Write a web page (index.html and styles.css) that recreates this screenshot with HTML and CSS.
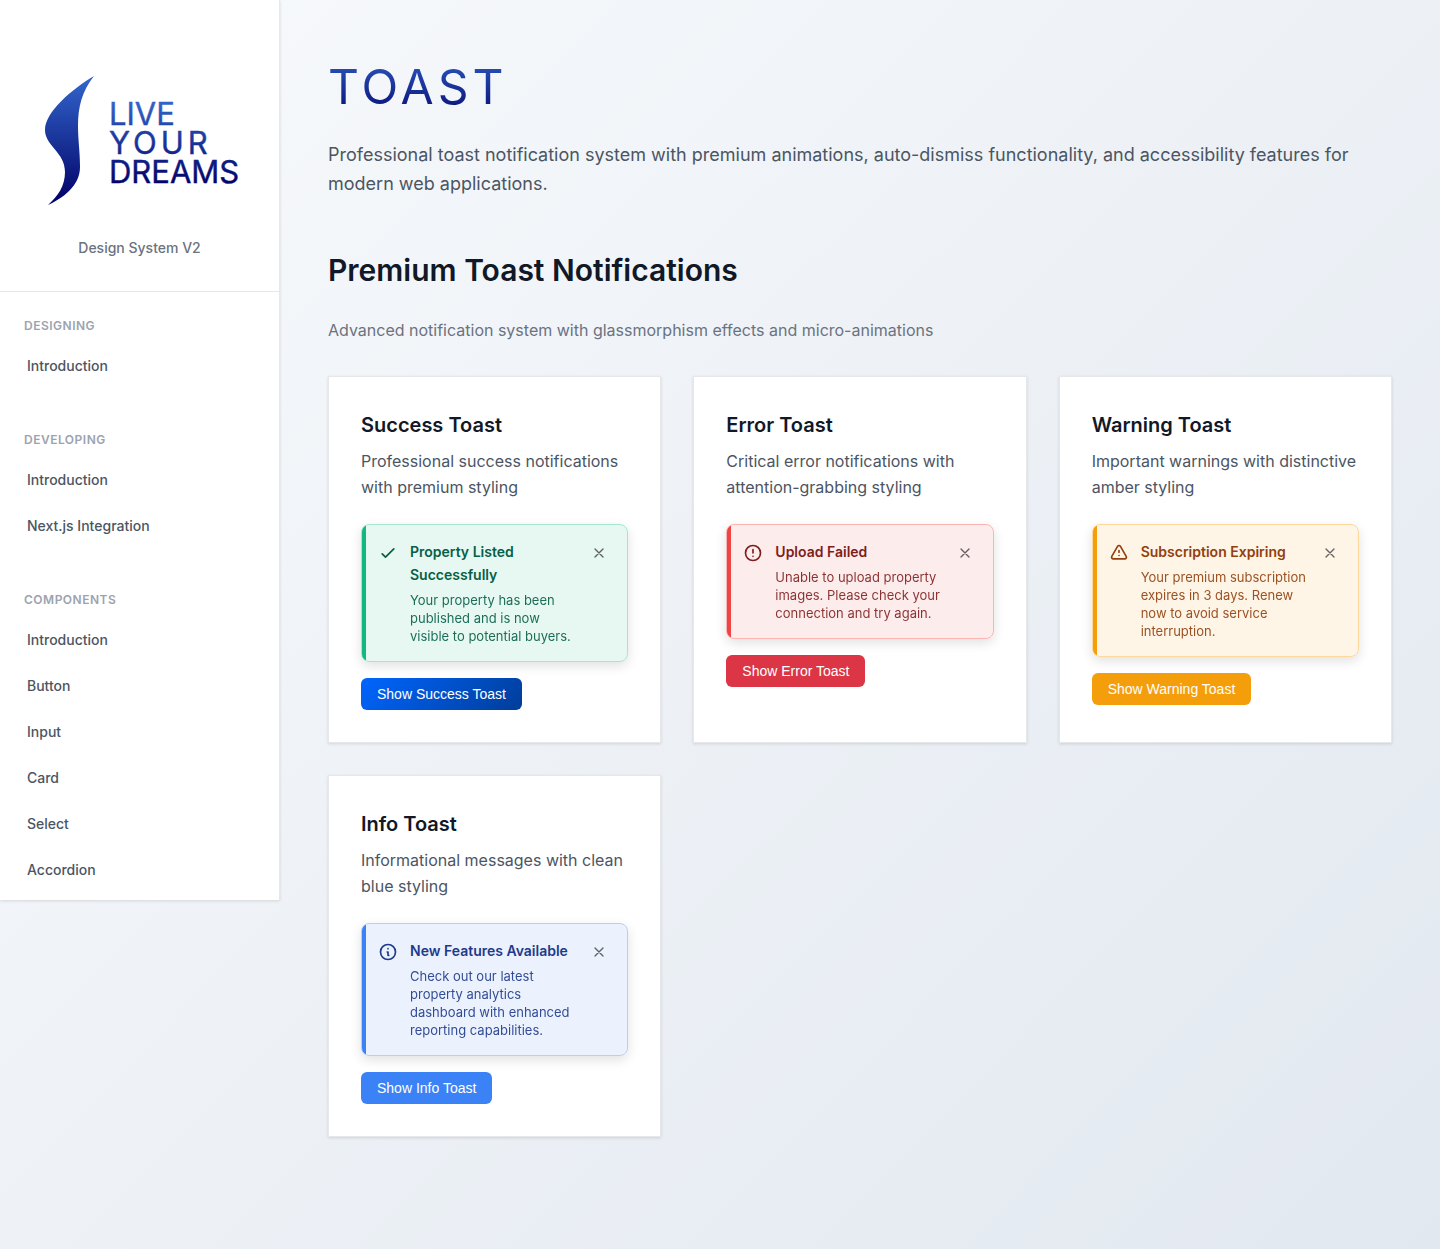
FILE: index.html
```html
<!DOCTYPE html>
<html lang="en">
<head>
<meta charset="utf-8">
<meta name="viewport" content="width=device-width, initial-scale=1">
<title>Toast – Live Your Dreams Design System</title>
<link rel="stylesheet" href="styles.css">
</head>
<body>
<div class="layout">
  <aside class="sidebar">
    <header class="brand">
      <svg class="logo" viewBox="0 0 204 134" role="img" aria-label="Live Your Dreams">
        <defs>
          <linearGradient id="mark" x1="0" y1="0" x2="0" y2="1">
            <stop offset="0" stop-color="#3366cc"/>
            <stop offset="1" stop-color="#000066"/>
          </linearGradient>
          <linearGradient id="words" gradientUnits="userSpaceOnUse" x1="0" y1="26" x2="0" y2="112">
            <stop offset="0" stop-color="#3366cc"/>
            <stop offset="1" stop-color="#000066"/>
          </linearGradient>
        </defs>
        <path fill="url(#mark)" d="M56 2C34 15 7 38 7 56C7 72 27 78 27 98C27 112 20 122 10 131C25 124 42 112 42 93C42 77 40 66 40 52C40 33 44 17 56 2Z"/>
        <g class="logo-text" fill="url(#words)">
          <text x="71" y="51">LIVE</text>
          <text x="71" y="80" class="logo-wide">YOUR</text>
          <text x="71" y="109">DREAMS</text>
        </g>
      </svg>
      <p class="brand-sub">Design System V2</p>
    </header>
    <nav class="nav" aria-label="Documentation">
      <section class="nav-section">
        <h2 class="nav-title">Designing</h2>
        <ul class="nav-list">
          <li><a class="nav-link" href="#designing">Introduction</a></li>
        </ul>
      </section>
      <section class="nav-section">
        <h2 class="nav-title">Developing</h2>
        <ul class="nav-list">
          <li><a class="nav-link" href="#developing">Introduction</a></li>
          <li><a class="nav-link" href="#nextjs">Next.js Integration</a></li>
        </ul>
      </section>
      <section class="nav-section">
        <h2 class="nav-title">Components</h2>
        <ul class="nav-list">
          <li><a class="nav-link" href="#components">Introduction</a></li>
          <li><a class="nav-link" href="#button">Button</a></li>
          <li><a class="nav-link" href="#input">Input</a></li>
          <li><a class="nav-link" href="#card">Card</a></li>
          <li><a class="nav-link" href="#select">Select</a></li>
          <li><a class="nav-link" href="#accordion">Accordion</a></li>
        </ul>
      </section>
    </nav>
  </aside>

  <main class="main">
    <h1 class="page-title">TOAST</h1>
    <p class="page-lead">Professional toast notification system with premium animations, auto-dismiss functionality, and accessibility features for modern web applications.</p>
    <h2 class="section-title">Premium Toast Notifications</h2>
    <p class="section-lead">Advanced notification system with glassmorphism effects and micro-animations</p>

    <div class="grid">
      <article class="card">
        <h3 class="card-title">Success Toast</h3>
        <p class="card-text">Professional success notifications with premium styling</p>
        <div class="toast toast-success">
          <svg class="toast-icon" viewBox="0 0 24 24" aria-hidden="true"><path d="m5 13 4 4L19 7"/></svg>
          <div class="toast-body">
            <h4 class="toast-title">Property Listed Successfully</h4>
            <p class="toast-message">Your property has been published and is now visible to potential buyers.</p>
          </div>
          <button class="toast-close" type="button" aria-label="Close"><svg viewBox="0 0 24 24" aria-hidden="true"><path d="M18 6 6 18M6 6l12 12"/></svg></button>
        </div>
        <button class="btn btn-primary" type="button">Show Success Toast</button>
      </article>

      <article class="card">
        <h3 class="card-title">Error Toast</h3>
        <p class="card-text">Critical error notifications with attention-grabbing styling</p>
        <div class="toast toast-error">
          <svg class="toast-icon" viewBox="0 0 24 24" aria-hidden="true"><path d="M12 8v4m0 4h.01M21 12a9 9 0 1 1-18 0 9 9 0 0 1 18 0z"/></svg>
          <div class="toast-body">
            <h4 class="toast-title">Upload Failed</h4>
            <p class="toast-message">Unable to upload property images. Please check your connection and try again.</p>
          </div>
          <button class="toast-close" type="button" aria-label="Close"><svg viewBox="0 0 24 24" aria-hidden="true"><path d="M18 6 6 18M6 6l12 12"/></svg></button>
        </div>
        <button class="btn btn-error" type="button">Show Error Toast</button>
      </article>

      <article class="card">
        <h3 class="card-title">Warning Toast</h3>
        <p class="card-text">Important warnings with distinctive amber styling</p>
        <div class="toast toast-warning">
          <svg class="toast-icon" viewBox="0 0 24 24" aria-hidden="true"><path d="M12 9v2m0 4h.01m-6.938 4h13.856c1.54 0 2.502-1.667 1.732-3L13.732 4c-.77-1.333-2.694-1.333-3.464 0L3.34 16c-.77 1.333.192 3 1.732 3z"/></svg>
          <div class="toast-body">
            <h4 class="toast-title">Subscription Expiring</h4>
            <p class="toast-message">Your premium subscription expires in 3 days. Renew now to avoid service interruption.</p>
          </div>
          <button class="toast-close" type="button" aria-label="Close"><svg viewBox="0 0 24 24" aria-hidden="true"><path d="M18 6 6 18M6 6l12 12"/></svg></button>
        </div>
        <button class="btn btn-warning" type="button">Show Warning Toast</button>
      </article>

      <article class="card">
        <h3 class="card-title">Info Toast</h3>
        <p class="card-text">Informational messages with clean blue styling</p>
        <div class="toast toast-info">
          <svg class="toast-icon" viewBox="0 0 24 24" aria-hidden="true"><path d="M13 16h-1v-4h-1m1-4h.01M21 12a9 9 0 1 1-18 0 9 9 0 0 1 18 0z"/></svg>
          <div class="toast-body">
            <h4 class="toast-title">New Features Available</h4>
            <p class="toast-message">Check out our latest property analytics dashboard with enhanced reporting capabilities.</p>
          </div>
          <button class="toast-close" type="button" aria-label="Close"><svg viewBox="0 0 24 24" aria-hidden="true"><path d="M18 6 6 18M6 6l12 12"/></svg></button>
        </div>
        <button class="btn btn-info" type="button">Show Info Toast</button>
      </article>
    </div>
  </main>
</div>
</body>
</html>
```
FILE: styles.css
```css
*, *::before, *::after { box-sizing: border-box; }

body, h1, h2, h3, h4, p, ul { margin: 0; padding: 0; }

body {
  min-height: 100vh;
  font-family: Inter, "Liberation Sans", sans-serif;
  font-size: 16px;
  line-height: 26px;
  color: #111827;
  background: linear-gradient(135deg, #f8fafc 0%, #e2e8f0 100%);
}

.layout { display: flex; align-items: flex-start; }

/* Sidebar */
.sidebar {
  flex: 0 0 280px;
  padding-bottom: 7px;
  background: #fff;
  border-right: 1px solid #e5e7eb;
  box-shadow: 0 1px 3px rgba(0, 0, 0, .12);
}

.brand {
  display: flex;
  flex-direction: column;
  align-items: center;
  gap: 28px;
  padding: 74px 32px 32px;
  border-bottom: 1px solid #e5e7eb;
}

.logo { display: block; width: 204px; height: 134px; }
.logo-text { font-size: 31px; stroke: url(#words); stroke-width: .4px; }
.logo-wide { letter-spacing: 4px; }

.brand-sub { font-size: 14px; line-height: 23px; font-weight: 500; color: #6b7280; }

.nav { display: flex; flex-direction: column; gap: 41px; padding-top: 24px; }

.nav-title {
  padding: 0 24px;
  margin-bottom: 7px;
  font-size: 12px;
  line-height: 20px;
  font-weight: 600;
  letter-spacing: 0.5px;
  text-transform: uppercase;
  color: #9ca3af;
}

.nav-list { list-style: none; }

.nav-link {
  display: block;
  padding: 12px 27px;
  font-size: 14px;
  line-height: 22px;
  font-weight: 500;
  color: #4b5563;
  text-decoration: none;
}

/* Page */
.main { flex: 1; min-width: 0; padding: 48px 48px 112px; }

.page-title {
  margin-bottom: 14px;
  font-size: 48px;
  line-height: 78px;
  font-weight: 400;
  letter-spacing: 4px;
  color: transparent;
  background: linear-gradient(180deg, #3366cc, #000066);
  -webkit-background-clip: text;
  background-clip: text;
}

.page-lead { margin-bottom: 48px; font-size: 18px; line-height: 29px; color: #4b5563; }

.section-title { margin-bottom: 23px; font-size: 30px; line-height: 48px; font-weight: 600; }

.section-lead { margin-bottom: 33px; color: #6b7280; }

.grid { display: grid; grid-template-columns: repeat(3, minmax(0, 1fr)); gap: 32px; }

.card {
  padding: 32px;
  background: #fff;
  border: 1px solid #e5e7eb;
  box-shadow: 0 1px 3px rgba(0, 0, 0, .12);
}

.card-title { margin-bottom: 7px; font-size: 20px; line-height: 32px; font-weight: 600; }
.card-text { margin-bottom: 24px; color: #4b5563; }

/* Toast */
.toast {
  display: flex;
  align-items: flex-start;
  gap: 12px;
  margin-bottom: 16px;
  padding: 15px 16px 16px;
  border: 1px solid;
  border-radius: 8px;
  box-shadow: 0 4px 12px rgba(0, 0, 0, .12);
}

.toast-icon, .toast-close svg {
  fill: none;
  stroke: currentColor;
  stroke-width: 2;
  stroke-linecap: round;
  stroke-linejoin: round;
}

.toast-icon { flex: none; width: 20px; height: 20px; margin-top: 3px; }
.toast-body { flex: 1; min-width: 0; }
.toast-title { margin-bottom: 5px; font-size: 14px; line-height: 23px; font-weight: 600; }
.toast-message { font-size: 13px; line-height: 18px; opacity: .9; }

.toast-close {
  flex: none;
  display: grid;
  place-items: center;
  width: 24px;
  height: 24px;
  margin-top: 1px;
  padding: 0;
  border: 0;
  background: none;
  color: #000;
  opacity: .6;
}
.toast-close svg { width: 16px; height: 16px; }

.toast-success { color: #065f46; border-color: #a7e5cd; background: linear-gradient(90deg, #10b981 4px, #e7f7f1 4px); }
.toast-error { color: #7f1d1d; border-color: #fbb4b4; background: linear-gradient(90deg, #ef4444 4px, #fdecec 4px); }
.toast-warning { color: #92400e; border-color: #fcd89a; background: linear-gradient(90deg, #f59e0b 4px, #fef5e7 4px); }
.toast-info { color: #1e3a8a; border-color: #b4cffb; background: linear-gradient(90deg, #3b82f6 4px, #ebf2fe 4px); }

/* Buttons */
.btn {
  display: block;
  height: 32px;
  padding: 0 16px;
  border: 0;
  border-radius: 6px;
  font: 500 14px/20px "Liberation Sans", sans-serif;
  color: #fff;
}
.btn-primary { background: linear-gradient(135deg, #0066ff, #003d99); }
.btn-error { background: #dc3545; }
.btn-warning { background: #f59e0b; }
.btn-info { background: #3b82f6; }
```
